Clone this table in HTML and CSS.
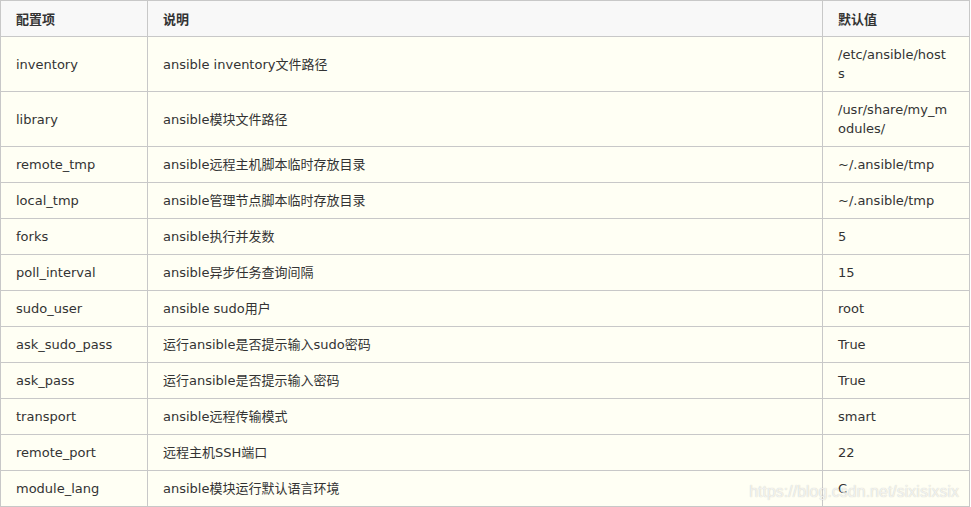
FILE: index.html
```html
<!DOCTYPE html>
<html>
<head>
<meta charset="utf-8">
<link rel="stylesheet" href="styles.css">
</head>
<body>
<div class="wrap">
<table class="cfg">
<colgroup><col class="c1"><col class="c2"><col class="c3"></colgroup>
<thead>
<tr><th>配置项</th><th>说明</th><th>默认值</th></tr>
</thead>
<tbody>
<tr><td>inventory</td><td>ansible inventory文件路径</td><td>/etc/ansible/hosts</td></tr>
<tr><td>library</td><td>ansible模块文件路径</td><td>/usr/share/my_modules/</td></tr>
<tr><td>remote_tmp</td><td>ansible远程主机脚本临时存放目录</td><td>~/.ansible/tmp</td></tr>
<tr><td>local_tmp</td><td>ansible管理节点脚本临时存放目录</td><td>~/.ansible/tmp</td></tr>
<tr><td>forks</td><td>ansible执行并发数</td><td>5</td></tr>
<tr><td>poll_interval</td><td>ansible异步任务查询间隔</td><td>15</td></tr>
<tr><td>sudo_user</td><td>ansible sudo用户</td><td>root</td></tr>
<tr><td>ask_sudo_pass</td><td>运行ansible是否提示输入sudo密码</td><td>True</td></tr>
<tr><td>ask_pass</td><td>运行ansible是否提示输入密码</td><td>True</td></tr>
<tr><td>transport</td><td>ansible远程传输模式</td><td>smart</td></tr>
<tr><td>remote_port</td><td>远程主机SSH端口</td><td>22</td></tr>
<tr><td>module_lang</td><td>ansible模块运行默认语言环境</td><td>C</td></tr>
</tbody>
</table>
<div class="wm">https://blog.csdn.net/sixisixsix</div>
</div>
</body>
</html>
```
FILE: styles.css
```css
html, body {
  margin: 0;
  padding: 0;
  background: #ffffff;
}
.wrap {
  position: relative;
  width: 969px;
}
.cfg {
  border-collapse: collapse;
  table-layout: fixed;
  width: 969px;
  font-family: "DejaVu Sans", Verdana, "Noto Sans CJK SC", sans-serif;
  font-size: 13px;
  line-height: 19px;
  color: #333;
}
.c1 { width: 147px; }
.c2 { width: 675px; }
.c3 { width: 147px; }
.cfg th, .cfg td {
  border: 1px solid #c8c8c8;
  padding: 8px 14px 8px 15px;
  text-align: left;
  vertical-align: middle;
  word-break: break-all;
}
.cfg td:last-child, .cfg th:last-child {
  padding-right: 20px;
}
.cfg th {
  background: #f8f8f8;
  font-weight: bold;
  font-family: "Noto Sans CJK SC", sans-serif;
}
.cfg td {
  background: #fffff4;
}
.wm {
  position: absolute;
  right: 10px;
  bottom: 6px;
  font-family: "Liberation Sans", Arial, sans-serif;
  font-size: 16px;
  color: rgba(255,255,255,0.75);
  text-shadow: 0 0 1px rgba(0,0,0,0.25);
  pointer-events: none;
}
```
